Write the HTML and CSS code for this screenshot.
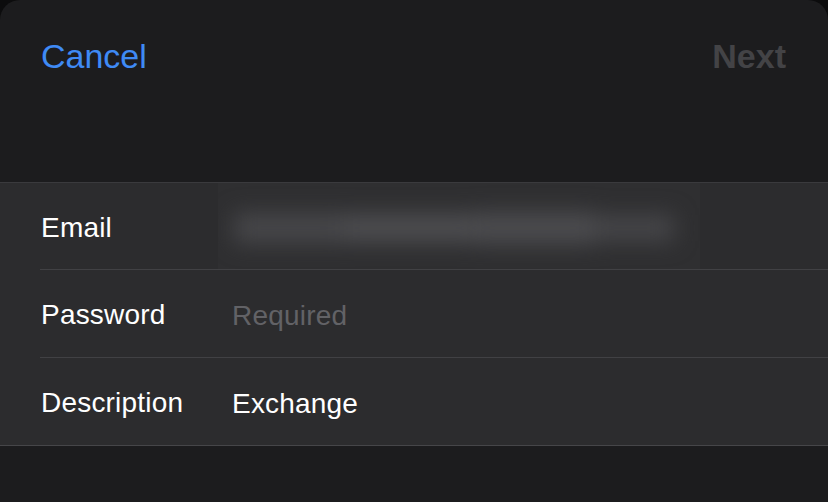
FILE: index.html
```html
<!DOCTYPE html>
<html>
<head>
<meta charset="utf-8">
<link rel="stylesheet" href="styles.css">
</head>
<body>
<div class="sheet">
  <header class="nav">
    <span class="cancel">Cancel</span>
    <span class="next">Next</span>
  </header>
  <section class="group">
    <div class="row first">
      <span class="label">Email</span>
      <div class="blurred">
        <div class="smear">
          <span class="seg s1"></span>
          <span class="seg s2"></span>
          <span class="seg s3"></span>
          <span class="seg s4"></span>
        </div>
      </div>
    </div>
    <div class="row">
      <span class="label">Password</span>
      <span class="value placeholder">Required</span>
    </div>
    <div class="row last">
      <span class="label">Description</span>
      <span class="value">Exchange</span>
    </div>
  </section>
</div>
</body>
</html>
```

FILE: styles.css
```css
html, body {
  margin: 0;
  padding: 0;
  background: #0c0c0d;
  height: 100%;
}
body {
  font-family: "Liberation Sans", Arial, sans-serif;
  -webkit-font-smoothing: antialiased;
}
.sheet {
  height: 502px;
  background: #1c1c1e;
  border-radius: 20px 20px 0 0;
  overflow: hidden;
}
.nav {
  height: 183px;
  display: flex;
  justify-content: space-between;
  align-items: flex-start;
  padding: 37px 42px 0 41px;
  box-sizing: border-box;
  border-bottom: 1px solid #3a3a3d;
}
.cancel {
  color: #3f8af5;
  font-size: 34px;
  line-height: 38px;
}
.next {
  color: #434346;
  font-size: 34px;
  line-height: 38px;
  font-weight: bold;
}
.group {
  background: #2c2c2e;
  padding-left: 40px;
  border-bottom: 1px solid #464649;
}
.row {
  height: 87px;
  display: flex;
  align-items: center;
  border-bottom: 1px solid #414144;
}
.row.first {
  height: 86px;
}
.row.last {
  border-bottom: none;
}
.label {
  width: 191px;
  flex: none;
  color: #ffffff;
  font-size: 28px;
  padding-left: 1px;
  padding-top: 3px;
  letter-spacing: 0.2px;
}
.value {
  color: #ffffff;
  font-size: 28px;
  padding-top: 4px;
  letter-spacing: 0.2px;
}
.placeholder {
  color: #626266;
}
.blurred {
  width: 482px;
  height: 86px;
  margin-left: -14px;
  background: #2f2f31;
  overflow: hidden;
}
.smear {
  display: flex;
  align-items: center;
  height: 100%;
  padding-left: 16px;
  padding-top: 4px;
  box-sizing: border-box;
  filter: blur(11px);
}
.seg {
  display: block;
  height: 30px;
  background: #4b4b4e;
}
.s1 { width: 110px; background: #47474a; }
.s2 { width: 130px; background: #4e4e51; height: 28px; }
.s3 { width: 120px; background: #4c4c4f; height: 32px; }
.s4 { width: 80px; background: #464649; height: 26px; }
```
